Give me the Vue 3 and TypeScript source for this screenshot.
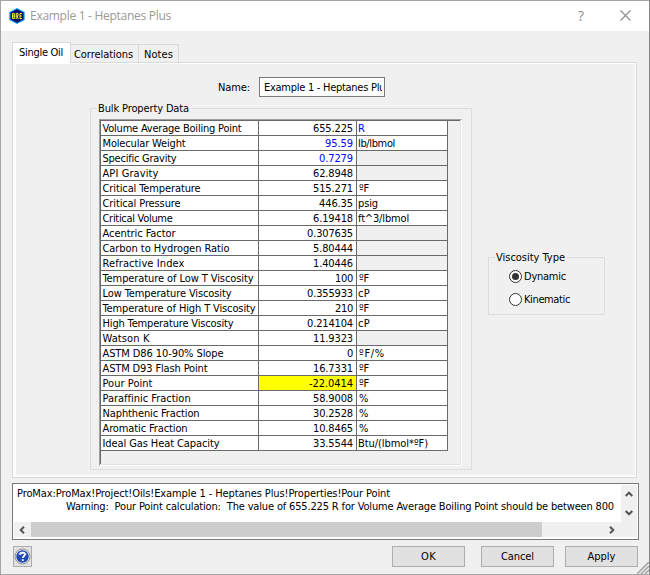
<script setup lang="ts">
import { ref } from 'vue'

interface Row {
  label: string
  width: number
  value: string
  unit: string
  unitWidth: number
  tone?: 'blue' | 'warn'
  unitBlue?: boolean
}

const row = (
  label: string,
  width: number,
  value: string,
  unit = '',
  unitWidth = 0,
  extra: Partial<Row> = {},
): Row => ({ label, width, value, unit, unitWidth, ...extra })

const rows: Row[] = [
  row('Volume Average Boiling Point', 139, '655.225', 'R', 7, { unitBlue: true }),
  row('Molecular Weight', 83, '95.59', 'lb/lbmol', 37, { tone: 'blue' }),
  row('Specific Gravity', 74, '0.7279', '', 0, { tone: 'blue' }),
  row('API Gravity', 56, '62.8948'),
  row('Critical Temperature', 98, '515.271', 'ºF', 10),
  row('Critical Pressure', 78, '446.35', 'psig', 20),
  row('Critical Volume', 70, '6.19418', 'ft^3/lbmol', 51),
  row('Acentric Factor', 73, '0.307635'),
  row('Carbon to Hydrogen Ratio', 127, '5.80444'),
  row('Refractive Index', 82, '1.40446'),
  row('Temperature of Low T Viscosity', 151, '100', 'ºF', 10),
  row('Low Temperature Viscosity', 129, '0.355933', 'cP', 12),
  row('Temperature of High T Viscosity', 153, '210', 'ºF', 10),
  row('High Temperature Viscosity', 131, '0.214104', 'cP', 12),
  row('Watson K', 47, '11.9323'),
  row('ASTM D86 10-90% Slope', 121, '0', 'ºF/%', 26),
  row('ASTM D93 Flash Point', 105, '16.7331', 'ºF', 10),
  row('Pour Point', 50, '-22.0414', 'ºF', 10, { tone: 'warn' }),
  row('Paraffinic Fraction', 88, '58.9008', '%', 11),
  row('Naphthenic Fraction', 97, '30.2528', '%', 11),
  row('Aromatic Fraction', 85, '10.8465', '%', 11),
  row('Ideal Gas Heat Capacity', 117, '33.5544', 'Btu/(lbmol*ºF)', 70),
]

const source = 'ProMax:ProMax!Project!Oils!Example 1 - Heptanes Plus!Properties!Pour Point'
const warning =
  'Warning:  Pour Point calculation:  The value of 655.225 R for Volume Average Boiling Point should be between 800'

// Digits advance by six pixels, punctuation by four.
const valueWidth = (v: string): number =>
  [...v].reduce((sum, c) => sum + (/\d/.test(c) ? 6 : 4), 0)

// Spreads a label's letters so that it takes up the given width.
const vFit = {
  mounted(el: HTMLElement, binding: { value: number }) {
    if (!binding.value) return
    const range = document.createRange()
    range.selectNodeContents(el)
    const natural = range.getBoundingClientRect().width
    const count = (el.textContent ?? '').length
    if (count) el.style.letterSpacing = `${(binding.value - natural) / count}px`
  },
}

const viscosity = ref('Dynamic')
const options = [
  { name: 'Dynamic', width: 42 },
  { name: 'Kinematic', width: 46 },
]
</script>

<template>
  <div class="window">
    <header class="titlebar">
      <svg class="logo" width="16" height="16" viewBox="0 0 16 16">
        <path d="M8 0 15.7 4V12L8 16 .3 12V4Z" fill="#08a0f0" />
        <path d="M8 1.200 14.500 4.500V11.500L8 14.800 1.500 11.500V4.500Z" fill="#10106c" />
        <g fill="none" stroke="#f0f020" stroke-width="1">
          <path d="M3.500 5.500V10.500H5.300V5.500ZM3.500 8H5.300" />
          <path d="M7.200 11V5.500H9V8H7.200M8.200 8 9.200 11" />
          <path d="M13 5.500H11V10.500H13M11 8H12.800" />
        </g>
      </svg>
      <span v-fit="141" class="title">Example 1 - Heptanes Plus</span>
      <span class="context">?</span>
      <svg class="close" width="11" height="11" viewBox="0 0 11 11">
        <path d="M.5.5l10 10M10.500.5l-10 10" stroke="#8c8c8c" stroke-width="1.100" />
      </svg>
    </header>

    <main class="content">
      <nav class="tabs">
        <div class="tab active"><span v-fit="44">Single Oil</span></div>
        <div class="tab second"><span v-fit="59">Correlations</span></div>
        <div class="tab third"><span v-fit="29">Notes</span></div>
      </nav>
      <section class="panel">
        <div class="left">
          <div class="name-row">
            <span v-fit="32">Name:</span>
            <div class="field"><span v-fit="126">Example 1 - Heptanes Plus</span></div>
          </div>
          <fieldset class="bulk">
            <legend><span v-fit="91">Bulk Property Data</span></legend>
            <div class="sheet">
              <div class="grid">
                <template v-for="r in rows" :key="r.label">
                  <div class="cell name"><span v-fit="r.width">{{ r.label }}</span></div>
                  <div class="cell value" :class="r.tone">
                    <span v-fit="valueWidth(r.value)">{{ r.value }}</span>
                  </div>
                  <div
                    class="cell unit"
                    :class="{ empty: !r.unit, blue: r.unitBlue, inset: /^[º%]/.test(r.unit) }"
                  >
                    <span v-fit="r.unitWidth">{{ r.unit }}</span>
                  </div>
                </template>
              </div>
            </div>
          </fieldset>
        </div>
        <fieldset class="viscosity">
          <legend><span v-fit="69">Viscosity Type</span></legend>
          <div v-for="o in options" :key="o.name" class="option" @click="viscosity = o.name">
            <svg width="13" height="13" viewBox="0 0 13 13">
              <circle cx="6.500" cy="6.500" r="6" fill="#fff" stroke="#333" />
              <circle v-if="viscosity === o.name" cx="6.500" cy="6.500" r="3.500" fill="#333" />
            </svg>
            <span v-fit="o.width">{{ o.name }}</span>
          </div>
        </fieldset>
      </section>

      <section class="messages">
        <div class="log">
          <div class="lines">
            <div class="line"><span v-fit="373">{{ source }}</span></div>
            <div class="line detail"><span v-fit="548">{{ warning }}</span></div>
          </div>
          <div class="vbar">
            <svg width="8" height="6" viewBox="0 0 8 6"><path d="M.7 5 4 1.700 7.300 5" /></svg>
            <svg width="8" height="6" viewBox="0 0 8 6"><path d="M.7 1 4 4.300 7.300 1" /></svg>
          </div>
        </div>
        <div class="hbar">
          <svg width="6" height="8" viewBox="0 0 6 8"><path d="M5 .7 1.700 4 5 7.300" /></svg>
          <div class="thumb"></div>
          <svg class="next" width="6" height="8" viewBox="0 0 6 8"><path d="M1 .7 4.300 4 1 7.300" /></svg>
        </div>
      </section>

      <footer class="actions">
        <button class="help">
          <svg width="17" height="17" viewBox="0 0 17 17">
            <circle cx="8.500" cy="8.500" r="7.500" fill="#e8e8e8" stroke="#8f8f8f" />
            <circle cx="8.500" cy="8.500" r="6.200" fill="#2049b4" />
            <path d="M3.500 7A5.300 5.300 0 0 1 13.500 7Q8 6 3.500 7Z" fill="#5078cd" />
            <path d="M6.100 6.700C6.100 3.900 11 3.900 11 6.500 11 8.300 8.700 8.200 8.700 10" fill="none" stroke="#fff" stroke-width="1.800" />
            <rect x="7.800" y="11.200" width="1.900" height="1.800" fill="#fff" />
          </svg>
        </button>
        <button class="ok"><span v-fit="15">OK</span></button>
        <button class="cancel"><span v-fit="33">Cancel</span></button>
        <button class="apply"><span v-fit="28">Apply</span></button>
      </footer>
      <svg class="grip" width="12" height="12" viewBox="0 0 12 12">
        <path d="M0 12 12 0M4 12 12 4M8 12 12 8" stroke="#a0a0a0" stroke-width="1.500" />
      </svg>
    </main>
  </div>
</template>

<style>
body {
  margin: 0;
  overflow: hidden;
}
</style>

<style scoped>
* {
  box-sizing: border-box;
}
.window {
  position: relative;
  width: 650px;
  height: 575px;
  display: flex;
  flex-direction: column;
  border: 1px solid #a5a5a5;
  border-right-color: #858585;
  background: #f0f0f0;
  color: #000;
  font: 11px/13px 'DejaVu Sans Condensed', 'DejaVu Sans', sans-serif;
}
span {
  white-space: pre;
}
.titlebar {
  height: 30px;
  flex: none;
  display: flex;
  align-items: center;
  padding: 0 18px 0 8px;
  background: #fff;
}
.title {
  margin-left: 5px;
  font: 12px/16px 'Open Sans', 'Noto Sans', sans-serif;
  color: #999;
}
.context {
  margin-left: auto;
  font: 14px/16px 'Open Sans', sans-serif;
  color: #8c8c8c;
}
.close {
  margin: 0 0 1px 36px;
}
.content {
  flex: 1;
  display: flex;
  flex-direction: column;
  padding: 11px 11px 0;
}
.tabs {
  display: flex;
  align-items: flex-end;
  height: 20px;
  flex: none;
}
.tab {
  height: 18px;
  border: 1px solid #d9d9d9;
  border-left: 0;
  border-bottom: 0;
  padding: 3px 0 0 5px;
}
.tab.active {
  position: relative;
  z-index: 1;
  width: 59px;
  height: 21px;
  margin-bottom: -1px;
  border-left: 1px solid #d9d9d9;
  background: #fff;
  padding: 3px 0 0 6px;
}
.second {
  width: 68px;
  padding-left: 3px;
}
.third {
  width: 40px;
}
.panel {
  width: 625px;
  height: 416px;
  flex: none;
  display: flex;
  border: 1px solid #d9d9d9;
  box-shadow: inset 3px 0 #fff, inset -1px 0 #fff, inset 0 1px #fff, inset 0 -2px #fff;
}
.left {
  width: 382px;
  margin-left: 77px;
}
.name-row {
  display: flex;
  align-items: center;
  padding: 14px 0 0 128px;
}
.field {
  width: 126px;
  height: 20px;
  margin-left: 9px;
  padding: 3px 0 0 4px;
  border: 1px solid #7a7a7a;
  background: #fff;
  overflow: hidden;
}
.field span {
  display: block;
  width: 118px;
  overflow: hidden;
}
fieldset {
  margin: 0;
  padding: 0;
  min-width: 0;
  border: 1px solid #dcdcdc;
}
legend {
  height: 13px;
  padding: 0 2px 0 1px;
}
.bulk {
  width: 382px;
  height: 368px;
  margin-top: 5px;
}
.bulk legend {
  margin-left: 6px;
}
.sheet {
  width: 363px;
  height: 347px;
  margin: 4px 0 0 8px;
  border: 1px solid #a0a0a0;
  border-right-color: #fff;
  border-bottom-color: #fff;
  box-shadow: inset -1px -1px #e3e3e3, inset 1px 1px #696969;
}
.grid {
  display: grid;
  grid-template-columns: 157px 97px 90px;
  grid-auto-rows: 14px;
  gap: 1px;
  width: 348px;
  height: 331px;
  padding: 1px;
  background: #696969;
}
.cell {
  padding: 1px 0 0 1px;
  background: #fff;
  line-height: 13px;
  overflow: hidden;
}
.cell span {
  display: inline-block;
}
.cell.name {
  padding-left: 1.5px;
}
.value {
  text-align: right;
  padding-right: 3px;
}
.blue {
  color: #00f;
}
.warn {
  background: #ff0;
}
.unit.inset {
  padding-left: 2px;
}
.empty {
  background: #f0f0f0;
}
.viscosity {
  width: 117px;
  height: 64px;
  margin: 188px 0 0 16px;
}
.viscosity legend {
  margin-left: 6px;
}
.option {
  display: flex;
  align-items: center;
  gap: 2px;
  height: 13px;
  margin: 6px 0 10px 20px;
}
.option + .option {
  margin-top: 0;
}
.messages {
  width: 627px;
  height: 57px;
  flex: none;
  margin-top: 5px;
  padding: 1px;
  border: 1px solid #7a7a7a;
  background: #fff;
}
.log {
  display: flex;
  height: 37px;
}
.lines {
  width: 607px;
  padding: 2px 0 0 3px;
}
.line {
  height: 13px;
}
.detail {
  padding-left: 49px;
}
.vbar {
  width: 16px;
  background: #f0f0f0;
  display: flex;
  flex-direction: column;
  align-items: center;
  justify-content: space-between;
  padding: 6px 0 6px;
}
.vbar path,
.hbar path {
  fill: none;
  stroke: #555;
  stroke-width: 2;
}
.hbar {
  display: flex;
  align-items: center;
  height: 15px;
  padding-left: 5px;
  background: #f0f0f0;
}
.thumb {
  width: 511px;
  height: 15px;
  margin-left: 6px;
  background: #cdcdcd;
}
.next {
  margin-left: 67px;
}
.actions {
  display: flex;
  padding: 6px 0 0 1px;
}
button {
  width: 73px;
  height: 21px;
  padding: 0;
  border: 1px solid #adadad;
  background: #e1e1e1;
  color: #000;
  font: inherit;
}
.help {
  width: 19px;
  display: flex;
  align-items: center;
  justify-content: center;
}
.help svg {
  flex: none;
}
.ok {
  margin-left: 360px;
}
.cancel {
  margin-left: 16px;
}
.apply {
  margin-left: 11px;
}
.grip {
  position: absolute;
  right: 0;
  bottom: 0;
}
</style>
